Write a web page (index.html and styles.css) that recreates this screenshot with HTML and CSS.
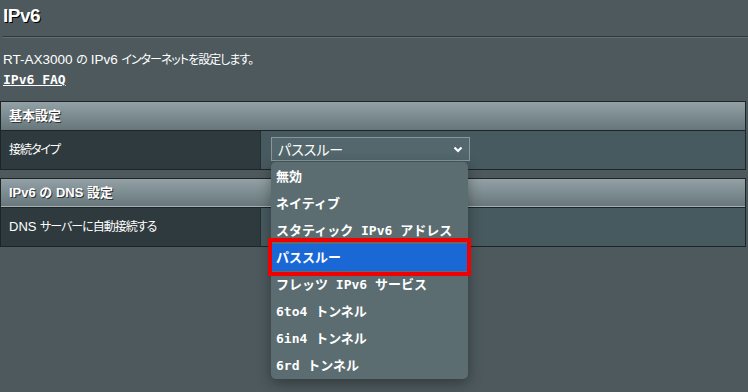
FILE: index.html
```html
<!DOCTYPE html>
<html lang="ja">
<head>
  <meta charset="utf-8">
  <link rel="stylesheet" href="styles.css">
</head>
<body>
<div class="page">
  <div class="title">IPv6</div>
  <div class="rule"></div>
  <p class="desc">RT-AX3000 <span class="ja">の</span> IPv6 <span class="ja">インターネットを設定します。</span></p>
  <p class="faq"><a href="#">IPv6 FAQ</a></p>

  <div class="section">
    <div class="head">基本設定</div>
    <div class="row">
      <div class="label"><span class="ja">接続タイプ</span></div>
      <div class="value">
        <div class="select">
          <span>パススルー</span>
          <svg width="10" height="7" viewBox="0 0 10 7"><polyline points="1.5,1.5 5,5 8.5,1.5" fill="none" stroke="#fff" stroke-width="2.2"/></svg>
        </div>
      </div>
    </div>
  </div>

  <div class="section">
    <div class="head">IPv6 の DNS 設定</div>
    <div class="row">
      <div class="label">DNS <span class="ja">サーバーに自動接続する</span></div>
      <div class="value"></div>
    </div>
  </div>

  <ul class="menu">
    <li>無効</li>
    <li>ネイティブ</li>
    <li>スタティック IPv6 アドレス</li>
    <li class="picked">パススルー</li>
    <li>フレッツ IPv6 サービス</li>
    <li>6to4 トンネル</li>
    <li>6in4 トンネル</li>
    <li>6rd トンネル</li>
  </ul>
  <div class="mark"></div>
</div>
</body>
</html>
```

FILE: styles.css
```css
body {
  margin: 0;
  background: #4d595d;
  color: #fff;
  font-family: "Liberation Sans", "Noto Sans CJK JP", sans-serif;
  font-size: 13px;
}

.page {
  position: relative;
  height: 392px;
  overflow: hidden;
}

/* Japanese runs in the body text are set tighter than the Latin */
.ja {
  font-size: 12px;
  letter-spacing: -1px;
  font-feature-settings: "palt";
}

.title {
  height: 36px;
  padding-left: 3px;
  line-height: 32px;
  font-size: 19px;
  font-weight: bold;
  letter-spacing: -0.5px;
  text-shadow: 1px 1px 0 #000;
}

.rule {
  margin-left: 3px;
  border-top: 1px solid #2e383b;
  border-bottom: 1px solid #627074;
}

.desc {
  margin: 12px 0 0 3px;
  line-height: 20px;
  font-size: 13.5px;
}

.faq {
  margin: 0 0 0 3px;
  line-height: 19px;
}

.faq a {
  color: #fff;
  font-family: "DejaVu Sans Mono", "Liberation Mono", monospace;
  font-weight: bold;
  font-size: 13px;
}

.section {
  margin: 12px 2px 0 0;
  border: 1px solid #1e2527;
}

.section + .section {
  margin-top: 8px;
}

.head {
  height: 28px;
  line-height: 28px;
  padding-left: 8px;
  font-weight: bold;
  background: linear-gradient(#93a1a6, #66767b);
  border-bottom: 1px solid #1e2527;
  text-shadow: 1px 1px 0 #333;
}

.section + .section .head {
  box-shadow: inset 0 -1px 0 #a4b0b4;
}

.row {
  display: flex;
  height: 38px;
}

.label {
  width: 251px;
  padding-left: 8px;
  line-height: 38px;
  background: #2f3a3e;
  border-right: 1px solid #263033;
}

.value {
  flex: 1;
  background: #475a5f;
  padding: 6px 0 0 10px;
}

.select {
  display: flex;
  align-items: center;
  justify-content: space-between;
  box-sizing: border-box;
  width: 199px;
  height: 24px;
  padding: 0 6px 0 6px;
  border: 1px solid #8a9699;
  background: #53676c;
  font-size: 14px;
  font-feature-settings: "palt";
}

.menu {
  position: absolute;
  left: 271px;
  top: 162px;
  width: 197px;
  margin: 0;
  padding: 1px 0 0 0;
  list-style: none;
  background: #5b6d71;
  border-radius: 5px;
  box-shadow: 0 4px 14px rgba(0, 0, 0, 0.35);
  font-family: "DejaVu Sans Mono", "Noto Sans CJK JP", monospace;
  font-weight: bold;
  font-size: 13px;
}

.menu li {
  height: 27px;
  line-height: 27px;
  padding-left: 5px;
}

.menu li.picked {
  background: #1a68d6;
}

.mark {
  position: absolute;
  left: 268px;
  top: 238px;
  width: 195px;
  height: 30px;
  border: 4px solid #f00000;
}
```
